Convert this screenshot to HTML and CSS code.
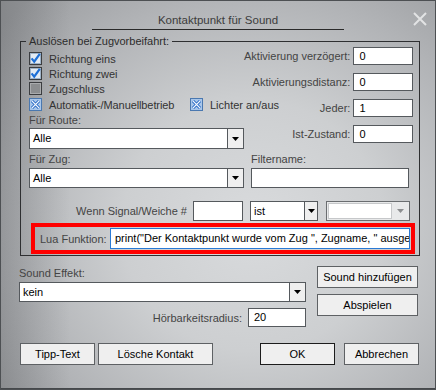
FILE: index.html
```html
<!DOCTYPE html>
<html lang="de">
<head>
  <meta charset="UTF-8">
  <title>Kontaktpunkt für Sound</title>
  <link rel="stylesheet" href="styles.css">
</head>
<body>
  <svg class="defs" width="0" height="0">
    <symbol id="cb-on" viewBox="0 0 13 13">
      <rect x="0.5" y="0.5" width="12" height="12" fill="#b9c7d6" stroke="#3b3d40"/>
      <rect x="1.5" y="1.5" width="10" height="10" fill="#e3ebf3" stroke="#9fb3c8"/>
      <path d="M2.6 6.4 L5.2 9.6 L10.8 1.8" fill="none" stroke="#1d6fd6" stroke-width="2.2"/>
    </symbol>
    <symbol id="cb-off" viewBox="0 0 13 13">
      <rect x="0.5" y="0.5" width="12" height="12" fill="#7d7f81" stroke="#3b3d40"/>
      <rect x="1.5" y="1.5" width="10" height="10" fill="#8b8d8f" stroke="#a9abad"/>
    </symbol>
    <symbol id="cb-x" viewBox="0 0 13 13">
      <rect x="0.5" y="0.5" width="12" height="12" fill="#a8c6ea" stroke="#4a78b0"/>
      <path d="M3 3 L10 10 M10 3 L3 10" stroke="#1f64c4" stroke-width="3"/>
      <path d="M3 3 L10 10 M10 3 L3 10" stroke="#f4f8fd" stroke-width="1.1"/>
    </symbol>
    <symbol id="arrow" viewBox="0 0 7 4">
      <path d="M0 0 H7 L3.5 4 Z"/>
    </symbol>
  </svg>

  <div class="window">
    <div class="titlebar">
      <div class="title">Kontaktpunkt für Sound</div>
      <svg class="close" width="14" height="14" viewBox="0 0 14 14">
        <path d="M1 1 L13 13 M13 1 L1 13" stroke="#e2e3e4" stroke-width="2"/>
      </svg>
    </div>

    <fieldset class="group">
      <legend>Auslösen bei Zugvorbeifahrt:</legend>

      <div class="top">
        <div class="checks">
          <div class="check"><svg><use href="#cb-on"/></svg>Richtung eins</div>
          <div class="check"><svg><use href="#cb-on"/></svg>Richtung zwei</div>
          <div class="check"><svg><use href="#cb-off"/></svg>Zugschluss</div>
          <div class="check-row">
            <div class="check wide"><svg><use href="#cb-x"/></svg>Automatik-/Manuellbetrieb</div>
            <div class="check"><svg><use href="#cb-x"/></svg>Lichter an/aus</div>
          </div>
          <div class="label route-label">Für Route:</div>
          <div class="select">
            <span class="value">Alle</span>
            <span class="arrow"><svg><use href="#arrow"/></svg></span>
          </div>
        </div>

        <div class="params">
          <div class="param"><span class="label">Aktivierung verzögert:</span><div class="field">0</div></div>
          <div class="param"><span class="label">Aktivierungsdistanz:</span><div class="field">0</div></div>
          <div class="param"><span class="label">Jeder:</span><div class="field">1</div></div>
          <div class="param"><span class="label">Ist-Zustand:</span><div class="field">0</div></div>
        </div>
      </div>

      <div class="filters">
        <div class="label">Für Zug:</div>
        <div class="label">Filtername:</div>
        <div class="select">
          <span class="value">Alle</span>
          <span class="arrow"><svg><use href="#arrow"/></svg></span>
        </div>
        <div class="field tall"></div>
      </div>

      <div class="signal">
        <span class="label">Wenn Signal/Weiche #</span>
        <div class="field tall signal-nr"></div>
        <div class="select is-select">
          <span class="value">ist</span>
          <span class="arrow"><svg><use href="#arrow"/></svg></span>
        </div>
        <div class="select disabled">
          <span class="value"></span>
          <span class="arrow"><svg><use href="#arrow"/></svg></span>
        </div>
      </div>

      <div class="lua">
        <span class="label lua-label">Lua Funktion:</span>
        <div class="field code">print("Der Kontaktpunkt wurde vom Zug ", Zugname, " ausgelöst")</div>
      </div>
    </fieldset>

    <div class="sound">
      <div class="sound-left">
        <div class="label">Sound Effekt:</div>
        <div class="select">
          <span class="value">kein</span>
          <span class="arrow"><svg><use href="#arrow"/></svg></span>
        </div>
        <div class="radius">
          <span class="label">Hörbarkeitsradius:</span>
          <div class="field radius-field">20</div>
        </div>
      </div>
      <div class="sound-right">
        <button class="btn">Sound hinzufügen</button>
        <button class="btn">Abspielen</button>
      </div>
    </div>

    <div class="buttons">
      <button class="btn small">Tipp-Text</button>
      <button class="btn delete">Lösche Kontakt</button>
      <button class="btn small default">OK</button>
      <button class="btn small cancel">Abbrechen</button>
    </div>
  </div>
</body>
</html>
```

FILE: styles.css
```css
* {
  box-sizing: border-box;
}
body {
  margin: 0;
  font-family: "Liberation Sans", Arial, sans-serif;
  font-size: 11px;
  color: #3a3a3a;
}
.defs {
  position: absolute;
}
.window {
  width: 436px;
  height: 390px;
  overflow: hidden;
  background:
    linear-gradient(to right, rgba(70, 72, 75, 0.25), rgba(70, 72, 75, 0) 70px),
    radial-gradient(ellipse 75% 80% at 58% 58%, #d9dbdd 0%, #cdcfd1 40%, #b1b3b6 75%, #9a9c9f 100%);
  box-shadow: inset 0 0 0 1px #4d5053, inset 0 -2px 0 #45484b;
}

/* title */
.titlebar {
  display: flex;
  height: 35px;
}
.title {
  width: 252px;
  height: 30px;
  margin-left: 92px;
  padding: 13px 0 2px;
  line-height: 14px;
  font-size: 11.5px;
  text-align: center;
  color: #3c3c3c;
  border-bottom: 1px solid #2a2a2a;
}
.close {
  margin: 12px 9px 0 auto;
}

/* group box */
.group {
  margin: 0 16px 0 20px;
  padding: 0 9px 1px 8px;
  border: 1px solid #2e2f31;
  min-width: 0;
}
.group legend {
  padding: 0 3px;
  margin-left: -3px;
  line-height: 12px;
  color: #2c2c2c;
}
.label {
  color: #444;
  line-height: 14px;
  white-space: nowrap;
}

.top {
  display: flex;
}
.checks {
  width: 215px;
  padding-top: 4px;
}
.check {
  display: flex;
  align-items: center;
  flex: none;
  height: 15px;
  color: #333;
  white-space: nowrap;
}
.check svg {
  width: 13px;
  height: 13px;
  margin-right: 7px;
  flex: none;
}
.check-row {
  display: flex;
  margin-top: 1px;
}
.check.wide {
  width: 161px;
  letter-spacing: -0.1px;
}
.route-label {
  margin-top: 1px;
}

.select {
  display: flex;
  height: 21px;
  margin-top: 1px;
  background: #fff;
  border: 1px solid #55595d;
}
.select .value {
  flex: 1;
  padding-left: 3px;
  line-height: 19px;
  color: #000;
}
.select .arrow {
  width: 16px;
  display: flex;
  align-items: center;
  justify-content: center;
  background: #efefef;
  border-left: 1px solid #55595d;
}
.select .arrow svg {
  width: 7px;
  height: 4px;
  fill: #000;
}

.params {
  flex: 1;
  display: flex;
  flex-direction: column;
  align-items: flex-end;
}
.param {
  display: flex;
  align-items: center;
}
.param + .param {
  margin-top: 8px;
}
.param .label {
  margin-right: 3px;
}
.field {
  width: 60px;
  height: 18px;
  padding-left: 5px;
  line-height: 16px;
  color: #000;
  background: #fff;
  border: 1px solid #55595d;
  white-space: nowrap;
  overflow: hidden;
}
.field.tall {
  height: 20px;
}

.filters {
  display: grid;
  grid-template-columns: 215px 1fr;
  column-gap: 7px;
  margin-top: 3px;
}
.filters .select {
  height: 20px;
  margin-top: 2px;
}
.filters .field {
  width: auto;
  margin: 2px 1px 0 0;
}

.signal {
  display: flex;
  align-items: center;
  justify-content: flex-end;
  margin-top: 13px;
  height: 20px;
}
.signal .label {
  margin-right: 6px;
}
.signal-nr {
  width: 50px;
}
.signal .select {
  height: 20px;
  margin-top: 0;
}
.is-select {
  width: 68px;
  margin-left: 7px;
}
.is-select .arrow {
  width: 13px;
}
.select.disabled {
  width: 84px;
  margin-left: 8px;
  background: #e8e9ea;
  border-color: #6a6d70;
  padding: 1px 0 1px 1px;
}
.select.disabled .value {
  background: #fff;
  border: 1px solid #c6c8ca;
}
.select.disabled .arrow {
  width: 17px;
  background: none;
  border-left: none;
}
.select.disabled .arrow svg {
  fill: #8c8e90;
}

.lua {
  display: flex;
  align-items: center;
  height: 31px;
  margin: 2px -5px 0 2px;
  padding: 0 1px 0 5px;
  border: 4px solid #ff0000;
}
.lua-label {
  width: 70px;
}
.field.code {
  flex: 1;
  height: 21px;
  line-height: 19px;
  padding-left: 4px;
  border-color: #2a7ad5;
}

/* sound */
.sound {
  display: flex;
  margin-top: 10px;
  padding-left: 19px;
}
.sound-left {
  width: 287px;
}
.sound-left .select {
  height: 20px;
  margin-top: 2px;
}
.radius {
  display: flex;
  align-items: center;
  justify-content: flex-end;
  margin-top: 6px;
}
.radius .label {
  margin-right: 6px;
}
.radius-field {
  width: 58px;
  height: 19px;
}
.sound-right {
  display: flex;
  flex-direction: column;
  gap: 6px;
  margin-left: 11px;
  width: 101px;
}

.btn {
  height: 22px;
  padding: 0;
  font-family: inherit;
  font-size: 11px;
  color: #000;
  background: #efefef;
  border: 1px solid #5e6164;
}
.btn.default {
  border-color: #1c1c1c;
}

.buttons {
  display: flex;
  margin-top: 16px;
  padding-left: 20px;
}
.btn.small {
  width: 75px;
}
.btn.delete {
  width: 115px;
  margin-left: 3px;
}
.btn.default {
  margin-left: 47px;
}
.btn.cancel {
  margin-left: 9px;
}
```
